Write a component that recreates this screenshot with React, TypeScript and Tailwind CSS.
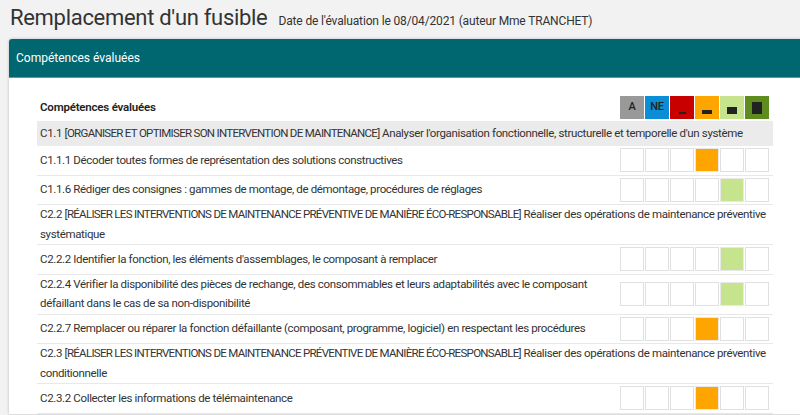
import React from "react";

type Row = { kind: "group" | "item" | "section"; code: string; caps?: string; text: string; tail?: string; value?: number };

const rows: Row[] = [
  {
    kind: "group",
    code: "C1.1 ",
    caps: "[ORGANISER ET OPTIMISER SON INTERVENTION DE MAINTENANCE]",
    text: " Analyser l'organisation fonctionnelle, structurelle et temporelle d'un système",
  },
  { kind: "item", code: "C1.1.1 ", text: "Décoder toutes formes de représentation des solutions constructives", value: 3 },
  { kind: "item", code: "C1.1.6 ", text: "Rédiger des consignes : gammes de montage, de démontage, procédures de réglages", value: 4 },
  {
    kind: "section",
    code: "C2.2 ",
    caps: "[RÉALISER LES INTERVENTIONS DE MAINTENANCE PRÉVENTIVE DE MANIÈRE ÉCO-RESPONSABLE]",
    text: " Réaliser des opérations de maintenance préventive",
    tail: "systématique",
  },
  { kind: "item", code: "C2.2.2 ", text: "Identifier la fonction, les éléments d'assemblages, le composant à remplacer", value: 4 },
  {
    kind: "item",
    code: "C2.2.4 ",
    text: "Vérifier la disponibilité des pièces de rechange, des consommables et leurs adaptabilités avec le composant défaillant dans le cas de sa non-disponibilité",
    value: 4,
  },
  {
    kind: "item",
    code: "C2.2.7 ",
    text: "Remplacer ou réparer la fonction défaillante (composant, programme, logiciel) en respectant les procédures",
    value: 3,
  },
  {
    kind: "section",
    code: "C2.3 ",
    caps: "[RÉALISER LES INTERVENTIONS DE MAINTENANCE PRÉVENTIVE DE MANIÈRE ÉCO-RESPONSABLE]",
    text: " Réaliser des opérations de maintenance préventive",
    tail: "conditionnelle",
  },
  { kind: "item", code: "C2.3.2 ", text: "Collecter les informations de télémaintenance", value: 3 },
];

function Legend() {
  return (
    <div className="flex gap-[1px] w-[149px]">
      <div className="w-[24px] h-[23px] bg-[#999999] flex items-center justify-center text-[11px] font-medium text-[#222]">A</div>
      <div className="w-[24px] h-[23px] bg-[#0b8ed6] flex items-center justify-center text-[11px] font-medium text-[#222] tracking-[-0.3px]">NE</div>
      <div className="w-[24px] h-[23px] bg-[#c80000] flex items-end justify-center pb-[5px]">
        <div className="w-[7px] h-[2px] bg-[#222]" />
      </div>
      <div className="w-[24px] h-[23px] bg-[#ffa500] flex items-end justify-center pb-[5px]">
        <div className="w-[10px] h-[4px] bg-[#222]" />
      </div>
      <div className="w-[24px] h-[23px] bg-[#c6e38e] flex items-end justify-center pb-[5px]">
        <div className="w-[10px] h-[7px] bg-[#222]" />
      </div>
      <div className="w-[24px] h-[23px] bg-[#5e8c1e] flex items-end justify-center pb-[5px]">
        <div className="w-[10px] h-[12px] bg-[#222]" />
      </div>
    </div>
  );
}

function Cells({ value }: { value?: number }) {
  return (
    <div className="flex gap-[1px] w-[149px] shrink-0">
      {[0, 1, 2, 3, 4, 5].map((i) => (
        <div
          key={i}
          className={
            "w-[24px] h-[24px] border " +
            (i === value ? (i === 3 ? "bg-[#ffa500] border-[#e8e8e8]" : "bg-[#c6e38e] border-[#e8e8e8]") : "bg-white border-[#e0e0e0]")
          }
        />
      ))}
    </div>
  );
}

function Label({ r }: { r: Row }) {
  return (
    <span>
      {r.code}
      {r.caps && <span className="tracking-[-0.7px]">{r.caps}</span>}
      {r.text}
      {r.tail && (
        <>
          <br />
          {r.tail}
        </>
      )}
    </span>
  );
}

export default function App() {
  return (
    <div
      className="w-[800px] h-[415px] overflow-hidden bg-[#f2f2f2] text-[#333]"
      style={{ fontFamily: "Roboto, 'Liberation Sans', sans-serif" }}
    >
      <div className="h-[39px] flex items-end pl-[10px] pb-[7px]">
        <span className="text-[22px] leading-[28px] text-[#333] tracking-[-0.3px]">Remplacement d'un fusible</span>
        <span className="text-[12px] leading-[16px] ml-[11px] mb-[3px] text-[#333] tracking-[-0.15px]">
          Date de l'évaluation le 08/04/2021 (auteur Mme TRANCHET)
        </span>
      </div>
      <div className="ml-[9px] w-[800px] bg-white shadow-[0_0_3px_rgba(0,0,0,0.25)] rounded-tl-[3px]">
        <div className="h-[39px] bg-[#006670] rounded-tl-[3px] flex items-center pl-[7px] text-white text-[12px] border-b border-[#5a9aa0]">
          Compétences évaluées
        </div>
        <div className="pl-[28px] pt-[18px]">
          <div className="w-[736px] text-[11.5px] tracking-[-0.35px]">
            <div className="flex items-center pr-[4px] mb-[2px]">
              <div className="flex-1 pl-[3px] font-semibold text-[#222] tracking-[-0.2px]">Compétences évaluées</div>
              <Legend />
            </div>
            {rows.map((r, idx) => {
              if (r.kind === "group") {
                return (
                  <div key={idx} className="bg-[#ebebeb] h-[25px] leading-[25px] pl-[3px] whitespace-nowrap">
                    <Label r={r} />
                  </div>
                );
              }
              if (r.kind === "section") {
                return (
                  <div key={idx} className="border-b border-[#e8e8e8] pl-[3px] pr-[2px] leading-[19.5px] whitespace-nowrap">
                    <Label r={r} />
                  </div>
                );
              }
              return (
                <div key={idx} className="border-b border-[#e8e8e8] flex items-center pr-[4px] min-h-[29.5px]">
                  <div className="flex-1 pl-[3px] pr-[14px] leading-[19.5px]">
                    <Label r={r} />
                  </div>
                  <Cells value={r.value} />
                </div>
              );
            })}
          </div>
        </div>
      </div>
    </div>
  );
}
